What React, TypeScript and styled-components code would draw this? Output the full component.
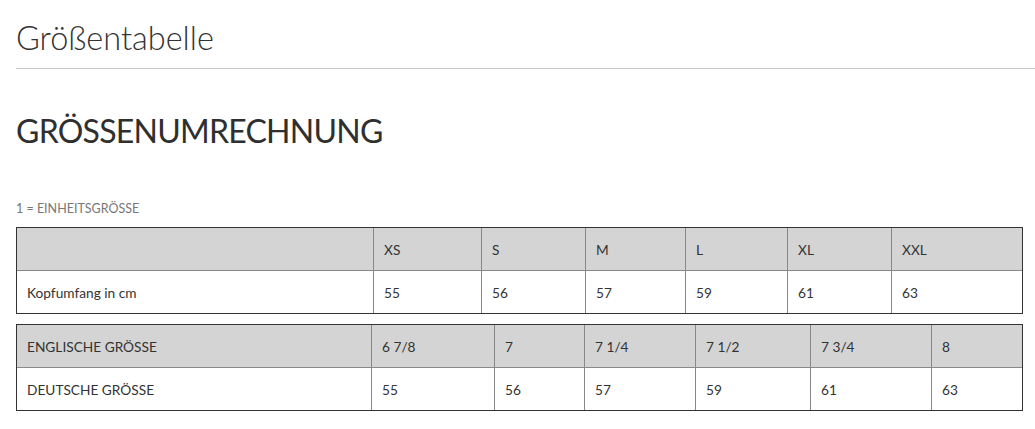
import React from 'react';
import styled, { createGlobalStyle } from 'styled-components';

const GlobalStyle = createGlobalStyle`
  html, body {
    margin: 0;
    padding: 0;
    background: #fff;
  }
  body {
    font-family: Lato, 'Open Sans', 'Liberation Sans', sans-serif;
    color: #333;
  }
`;

type SizeTable = {
  widths: number[];
  head: string[];
  body: string[];
};

const tables: SizeTable[] = [
  {
    widths: [356, 108, 104, 100, 102, 104, 131],
    head: ['', 'XS', 'S', 'M', 'L', 'XL', 'XXL'],
    body: ['Kopfumfang in cm', '55', '56', '57', '59', '61', '63'],
  },
  {
    widths: [354, 123, 90, 111, 115, 121, 91],
    head: ['ENGLISCHE GRÖSSE', '6 7/8', '7', '7 1/4', '7 1/2', '7 3/4', '8'],
    body: ['DEUTSCHE GRÖSSE', '55', '56', '57', '59', '61', '63'],
  },
];

const App = () => (
  <>
    <GlobalStyle />
    <Page>
      <PageHeader>
        <Title>Größentabelle</Title>
      </PageHeader>

      <Content>
        <Heading>GRÖSSENUMRECHNUNG</Heading>
        <Note>1 = EINHEITSGRÖSSE</Note>

        {tables.map((t, i) => (
          <Table key={i}>
            <colgroup>
              {t.widths.map((w, j) => (
                <Col key={j} $w={w} />
              ))}
            </colgroup>
            <tbody>
              <Row $head>
                {t.head.map((c, j) => (
                  <Cell key={j}>{c}</Cell>
                ))}
              </Row>
              <Row>
                {t.body.map((c, j) => (
                  <Cell key={j}>{c}</Cell>
                ))}
              </Row>
            </tbody>
          </Table>
        ))}
      </Content>
    </Page>
  </>
);

const Page = styled.div`
  padding-left: 16px;
`;

const PageHeader = styled.header`
  border-bottom: 1px solid #c8c8c8;
  padding: 20px 0 13px;
`;

const Title = styled.h1`
  margin: 0;
  font-size: 32.5px;
  line-height: 35px;
  font-weight: 300;
  color: #333;
`;

const Content = styled.main`
  width: 1005px;
  padding-top: 42px;
`;

const Heading = styled.h2`
  margin: 0 0 51px;
  font-size: 32px;
  line-height: 40px;
  font-weight: 400;
  letter-spacing: -0.75px;
  color: #2f2f2f;
`;

const Note = styled.p`
  margin: 0 0 11px;
  font-size: 12.5px;
  line-height: 14px;
  color: #777;
`;

const Table = styled.table`
  width: 1005px;
  table-layout: fixed;
  border-collapse: separate;
  border-spacing: 0;
  border: 1px solid #333;
  margin-bottom: 10px;
  font-size: 13.7px;
  color: #333;

  tr + tr td {
    border-top: 1px solid #888;
  }
`;

const Col = styled.col<{ $w: number }>`
  width: ${(p) => p.$w}px;
`;

const Row = styled.tr<{ $head?: boolean }>`
  height: ${(p) => (p.$head ? 42 : 43)}px;
  background: ${(p) => (p.$head ? '#d4d4d4' : '#fff')};
`;

const Cell = styled.td`
  padding: 0 10px;
  vertical-align: middle;
  white-space: nowrap;

  & + & {
    border-left: 1px solid #888;
  }
`;

export default App;
